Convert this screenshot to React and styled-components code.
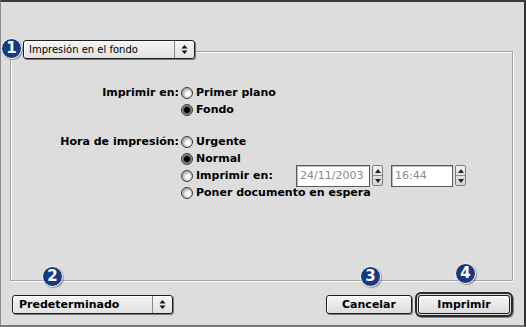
import React from "react";
import styled, { createGlobalStyle } from "styled-components";

const GlobalStyle = createGlobalStyle`
  html, body {
    margin: 0;
    padding: 0;
    background: #dddddd;
    font-family: "DejaVu Sans", Verdana, sans-serif;
    color: #000;
  }
`;

const Frame = styled.div`
  width: 526px;
  height: 327px;
  box-sizing: border-box;
  border-top: 2px solid #3c3c3c;
  border-right: 2px solid #333;
  border-left: 1px solid #8c8c8c;
  border-bottom: 2px solid #777;
  display: flex;
  flex-direction: column;
  position: relative;
`;

const GroupBox = styled.div`
  position: relative;
  margin: 49px 11px 0 9px;
  height: 230px;
  box-sizing: border-box;
  border: 1px solid #a2a2a2;
  box-shadow: inset 1px 1px 0 #fff, 1px 1px 0 #fff;
  padding: 32px 0 0 0;
`;

const Badge = styled.div`
  position: absolute;
  left: ${({ $x }) => $x}px;
  top: ${({ $y }) => $y}px;
  width: 19px;
  height: 19px;
  border-radius: 50%;
  background: #173a80;
  border: 1.5px solid #fff;
  box-shadow: 1px 1px 1px rgba(0, 0, 0, 0.35);
  color: #fff;
  font: bold 15px/19px "DejaVu Sans", sans-serif;
  text-align: center;
  z-index: 2;
`;

const Popup = styled.div`
  position: ${({ $legend }) => ($legend ? "absolute" : "relative")};
  left: ${({ $legend }) => ($legend ? "12px" : "auto")};
  top: ${({ $legend }) => ($legend ? "-12px" : "auto")};
  width: ${({ $w }) => $w}px;
  height: 19px;
  box-sizing: border-box;
  display: flex;
  align-items: stretch;
  background: linear-gradient(#f4f4f4, #e2e2e2);
  border: 1px solid #1e1e1e;
  border-radius: 3px;
  box-shadow: 1px 1px 0 #7a7a7a, inset 1px 1px 0 #fff;
`;

const PopupText = styled.div`
  flex: 1;
  padding-left: ${({ $bold }) => ($bold ? 6 : 5)}px;
  font-size: ${({ $bold }) => ($bold ? 11 : 10)}px;
  font-weight: ${({ $bold }) => ($bold ? "bold" : "normal")};
  line-height: 17px;
  white-space: nowrap;
`;

const PopupArrows = styled.div`
  width: 19px;
  border-left: 1px solid #8a8a8a;
  display: flex;
  align-items: center;
  justify-content: center;
`;

const FormGrid = styled.div`
  display: grid;
  grid-template-columns: 168px auto;
  column-gap: 2px;
  align-items: start;
  margin-top: ${({ $gap }) => $gap || 0}px;
`;

const Label = styled.div`
  font-size: 11px;
  font-weight: bold;
  line-height: 17px;
  text-align: right;
  white-space: nowrap;
`;

const Options = styled.div`
  display: flex;
  flex-direction: column;
`;

const OptionRow = styled.div`
  height: 17px;
  display: flex;
  align-items: center;
`;

const Option = styled.div`
  display: flex;
  align-items: center;
  gap: 3px;
  width: ${({ $w }) => ($w ? `${$w}px` : "auto")};
  font-size: 11px;
  font-weight: bold;
  white-space: nowrap;
`;

const Radio = styled.span`
  width: 12px;
  height: 12px;
  border-radius: 50%;
  box-sizing: border-box;
  border: 1px solid #3a3a3a;
  background: ${({ $on }) =>
    $on
      ? "radial-gradient(circle, #000 0 2.6px, #555 3.2px, #9a9a9a 5px)"
      : "radial-gradient(circle at 60% 60%, #fff 0 2px, #e2e2e2 3px, #b0b0b0 5.5px)"};
  flex: none;
`;

const TextField = styled.div`
  width: ${({ $w }) => $w}px;
  height: 22px;
  box-sizing: border-box;
  background: #fff;
  border: 1px solid #5a5a5a;
  box-shadow: inset 1px 1px 0 #bbb;
  color: #8a8a8a;
  font-size: 11px;
  line-height: 20px;
  padding-left: 3px;
  margin-right: 2px;
`;

const Spinner = styled.div`
  width: 11px;
  height: 21px;
  margin-right: ${({ $mr }) => $mr || 0}px;
  box-sizing: border-box;
  border: 1px solid #7c7c7c;
  border-radius: 2px;
  background: linear-gradient(#f2f2f2, #d6d6d6);
  display: flex;
  flex-direction: column;
`;

const SpinHalf = styled.div`
  flex: 1;
  display: flex;
  align-items: center;
  justify-content: center;
  & + & {
    border-top: 1px solid #8a8a8a;
  }
`;

const BottomBar = styled.div`
  display: flex;
  align-items: center;
  justify-content: space-between;
  margin-top: 11px;
  padding: 0 11px 0 11px;
  height: 25px;
`;

const ButtonGroup = styled.div`
  display: flex;
  align-items: center;
  gap: 3px;
`;

const Button = styled.div`
  position: relative;
  width: ${({ $w }) => $w}px;
  height: 19px;
  box-sizing: border-box;
  border: 1px solid #1e1e1e;
  border-radius: 3px;
  background: linear-gradient(#f6f6f6, #dcdcdc);
  box-shadow: ${({ $default }) =>
    $default
      ? "inset 1px 1px 0 #fff, 0 0 0 1px #dcdcdc, 0 0 0 3px #2a2a2a, 1px 1px 0 3px #888"
      : "inset 1px 1px 0 #fff, 1px 1px 0 #777"};
  margin: ${({ $default }) => ($default ? "0 3px" : "0")};
  font-size: 11px;
  font-weight: bold;
  line-height: 17px;
  text-align: center;
`;

const Tri = ({ up }) => (
  <svg width="6" height="4" viewBox="0 0 6 4">
    <path d={up ? "M0 4 L3 0 L6 4 Z" : "M0 0 L3 4 L6 0 Z"} fill="#222" />
  </svg>
);

const UpDown = () => (
  <svg width="7" height="11" viewBox="0 0 7 11">
    <path d="M0.5 4.5 L3.5 1 L6.5 4.5 Z" fill="#111" />
    <path d="M0.5 6.5 L3.5 10 L6.5 6.5 Z" fill="#111" />
  </svg>
);

const Spin = ({ mr }) => (
  <Spinner $mr={mr}>
    <SpinHalf><Tri up /></SpinHalf>
    <SpinHalf><Tri /></SpinHalf>
  </Spinner>
);

export default function App() {
  return (
    <>
      <GlobalStyle />
      <Frame>
        <GroupBox>
          <Badge $x={-10} $y={-14}>1</Badge>
          <Popup $legend $w={172}>
            <PopupText>Impresión en el fondo</PopupText>
            <PopupArrows><UpDown /></PopupArrows>
          </Popup>

          <FormGrid>
            <Label>Imprimir en:</Label>
            <Options>
              <OptionRow><Option><Radio />Primer plano</Option></OptionRow>
              <OptionRow><Option><Radio $on />Fondo</Option></OptionRow>
            </Options>
          </FormGrid>

          <FormGrid $gap={15}>
            <Label>Hora de impresión:</Label>
            <Options>
              <OptionRow><Option><Radio />Urgente</Option></OptionRow>
              <OptionRow><Option><Radio $on />Normal</Option></OptionRow>
              <OptionRow>
                <Option $w={115}><Radio />Imprimir en:</Option>
                <TextField $w={74}>24/11/2003</TextField>
                <Spin mr={8} />
                <TextField $w={62}>16:44</TextField>
                <Spin />
              </OptionRow>
              <OptionRow><Option><Radio />Poner documento en espera</Option></OptionRow>
            </Options>
          </FormGrid>
        </GroupBox>

        <BottomBar>
          <Popup $w={161}>
            <Badge $x={29} $y={-30}>2</Badge>
            <PopupText $bold>Predeterminado</PopupText>
            <PopupArrows><UpDown /></PopupArrows>
          </Popup>
          <ButtonGroup>
            <Button $w={86}>
              <Badge $x={33} $y={-30}>3</Badge>
              Cancelar
            </Button>
            <Button $w={92} $default>
              <Badge $x={36} $y={-33}>4</Badge>
              Imprimir
            </Button>
          </ButtonGroup>
        </BottomBar>
      </Frame>
    </>
  );
}
